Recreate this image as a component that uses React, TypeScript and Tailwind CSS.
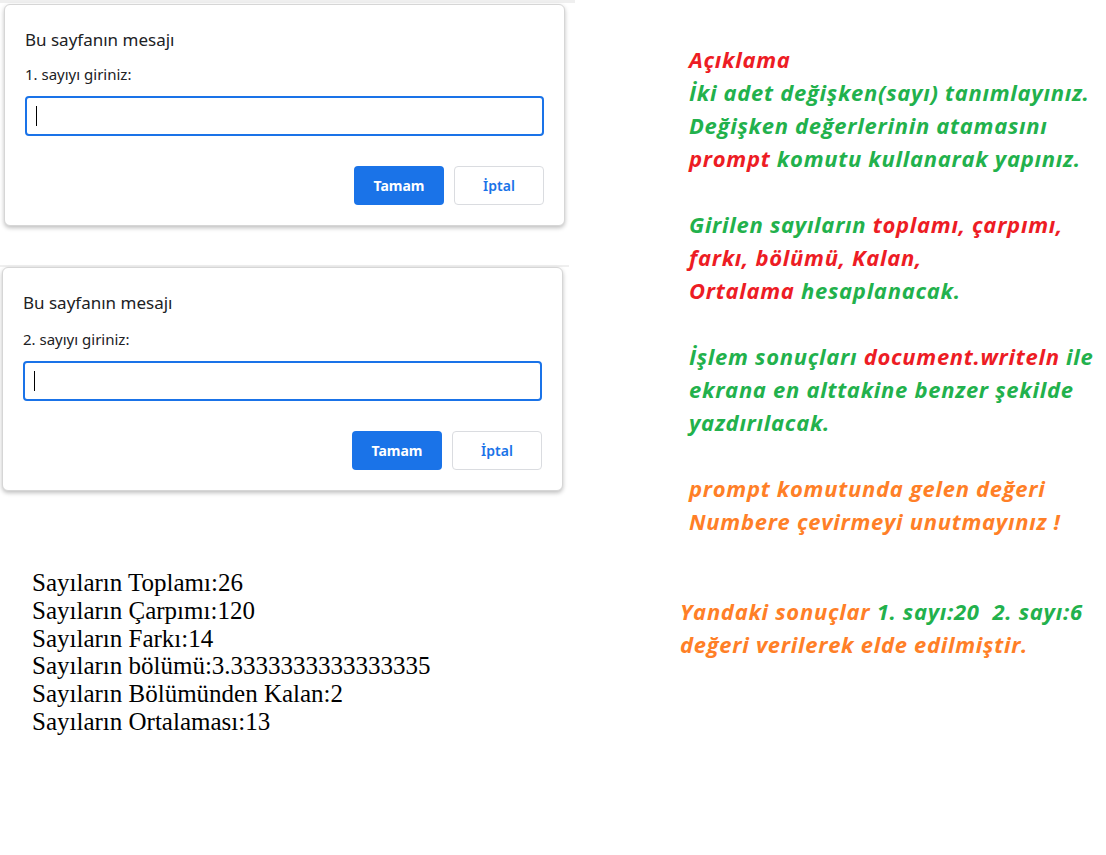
const RED = 'text-[#ed1c24]';
const GREEN = 'text-[#22b14c]';
const ORANGE = 'text-[#ff7f27]';

type DialogProps = {
  label: string;
  labelGap: string;
};

function PromptDialog({ label, labelGap }: DialogProps) {
  return (
    <div className="w-[561px] rounded-[6px] border border-[#d6d6d6] bg-white px-[20px] pb-[20px] pt-[25px] shadow-[0_2px_4px_rgba(0,0,0,0.25)]">
      <div className="text-[17px] leading-[20px] text-[#202124]">Bu sayfanın mesajı</div>
      <div className={`${labelGap} text-[15px] leading-[20px] text-[#202124]`}>{label}</div>
      <div className="mt-[12px] flex h-[40px] items-center rounded-[4px] border-2 border-[#1a73e8] px-[9px]">
        <div className="h-[20px] w-px bg-black" />
      </div>
      <div className="mt-[30px] flex justify-end gap-[10px]">
        <button className="h-[39px] w-[90px] rounded-[4px] bg-[#1a73e8] text-[14px] font-bold text-white">
          Tamam
        </button>
        <button className="h-[39px] w-[90px] rounded-[4px] border border-[#dadce0] bg-white text-[14px] font-semibold text-[#1a73e8]">
          İptal
        </button>
      </div>
    </div>
  );
}

const results = [
  'Sayıların Toplamı:26',
  'Sayıların Çarpımı:120',
  'Sayıların Farkı:14',
  'Sayıların bölümü:3.3333333333333335',
  'Sayıların Bölümünden Kalan:2',
  'Sayıların Ortalaması:13',
];

export default function App() {
  return (
    <div className="flex h-[855px] w-[1106px] bg-white">
      {/* Sol: prompt pencereleri ve sonuçlar */}
      <div className="flex w-[575px] flex-col font-['Noto_Sans',sans-serif]">
        <div className="h-[3px] w-[575px] bg-[#efefef]" />
        <div className="ml-[4px] mt-[1px]">
          <PromptDialog label="1. sayıyı giriniz:" labelGap="mt-[14px]" />
        </div>
        <div className="mt-[39px] h-[2px] w-[569px] bg-[#efefef]" />
        <div className="ml-[2px]">
          <PromptDialog label="2. sayıyı giriniz:" labelGap="mt-[16px]" />
        </div>
        <div className="ml-[32px] mt-[78px] font-['Liberation_Serif',serif] text-[25px] leading-[27.8px] text-black">
          {results.map((r) => (
            <div key={r}>{r}</div>
          ))}
        </div>
      </div>

      {/* Sağ: açıklama */}
      <div className="whitespace-nowrap pl-[114px] pt-[43px] font-['Open_Sans',sans-serif] text-[22px] font-bold italic leading-[33px] tracking-[0.7px]">
        <p className={RED}>Açıklama</p>
        <p className={GREEN}>İki adet değişken(sayı) tanımlayınız.</p>
        <p className={GREEN}>Değişken değerlerinin atamasını</p>
        <p className={GREEN}>
          <span className={RED}>prompt</span> komutu kullanarak yapınız.
        </p>

        <div className="mt-[33px]">
          <p className={GREEN}>
            Girilen sayıların <span className={RED}>toplamı, çarpımı,</span>
          </p>
          <p className={RED}>farkı, bölümü, Kalan,</p>
          <p className={RED}>
            Ortalama <span className={GREEN}>hesaplanacak.</span>
          </p>
        </div>

        <div className="mt-[33px]">
          <p className={GREEN}>
            İşlem sonuçları <span className={RED}>document.writeln</span> ile
          </p>
          <p className={GREEN}>ekrana en alttakine benzer şekilde</p>
          <p className={GREEN}>yazdırılacak.</p>
        </div>

        <div className="mt-[33px]">
          <p className={ORANGE}>prompt komutunda gelen değeri</p>
          <p className={ORANGE}>Numbere çevirmeyi unutmayınız !</p>
        </div>

        <div className="-ml-[9px] mt-[57px]">
          <p className={`${ORANGE} whitespace-pre`}>
            Yandaki sonuçlar <span className={GREEN}>1. sayı:20  2. sayı:6</span>
          </p>
          <p className={ORANGE}>değeri verilerek elde edilmiştir.</p>
        </div>
      </div>
    </div>
  );
}
